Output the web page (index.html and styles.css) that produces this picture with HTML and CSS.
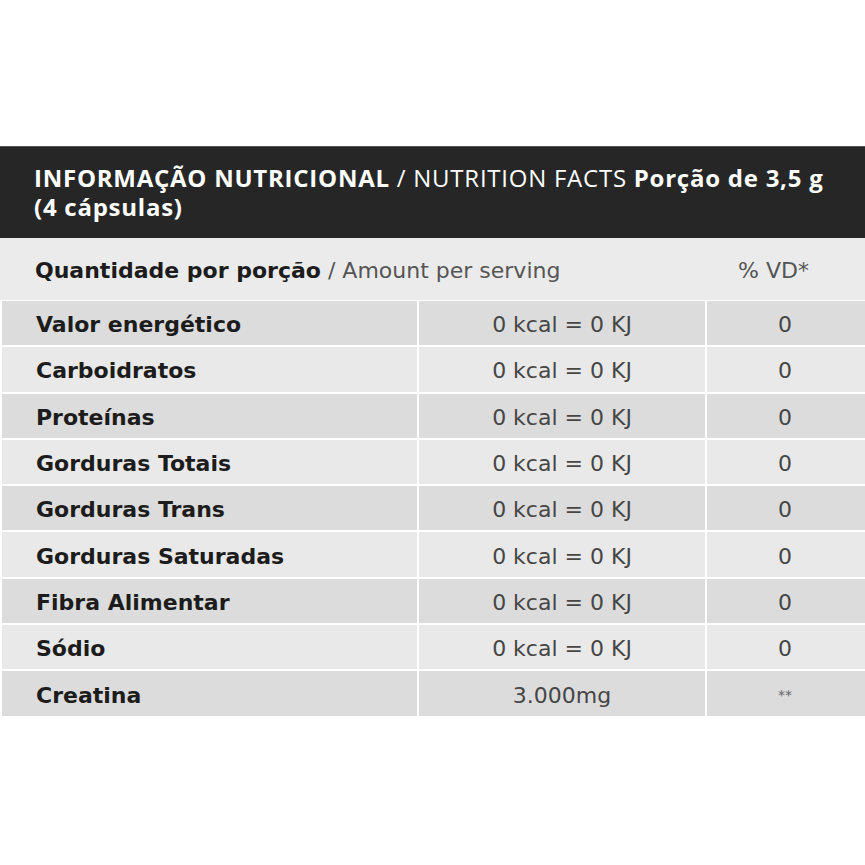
FILE: index.html
```html
<!DOCTYPE html>
<html lang="pt">
<head>
<meta charset="utf-8">
<title>Informação Nutricional</title>
<link rel="stylesheet" href="styles.css">
</head>
<body>
<div class="page">
  <div class="top-space"></div>
  <section class="facts">
    <header class="facts-head">
      <strong>INFORMAÇÃO NUTRICIONAL</strong> / NUTRITION FACTS <strong>Porção de 3,5 g (4 cápsulas)</strong>
    </header>
    <div class="facts-sub">
      <div class="sub-label"><strong>Quantidade por porção</strong> / Amount per serving</div>
      <div class="sub-vd">% VD*</div>
    </div>
    <div class="rows">
      <div class="row dark"><div class="c name">Valor energético</div><div class="c val">0 kcal = 0 KJ</div><div class="c vd">0</div></div>
      <div class="row light"><div class="c name">Carboidratos</div><div class="c val">0 kcal = 0 KJ</div><div class="c vd">0</div></div>
      <div class="row dark"><div class="c name">Proteínas</div><div class="c val">0 kcal = 0 KJ</div><div class="c vd">0</div></div>
      <div class="row light"><div class="c name">Gorduras Totais</div><div class="c val">0 kcal = 0 KJ</div><div class="c vd">0</div></div>
      <div class="row dark"><div class="c name">Gorduras Trans</div><div class="c val">0 kcal = 0 KJ</div><div class="c vd">0</div></div>
      <div class="row light"><div class="c name">Gorduras Saturadas</div><div class="c val">0 kcal = 0 KJ</div><div class="c vd">0</div></div>
      <div class="row dark"><div class="c name">Fibra Alimentar</div><div class="c val">0 kcal = 0 KJ</div><div class="c vd">0</div></div>
      <div class="row light"><div class="c name">Sódio</div><div class="c val">0 kcal = 0 KJ</div><div class="c vd">0</div></div>
      <div class="row dark"><div class="c name">Creatina</div><div class="c val">3.000mg</div><div class="c vd stars">**</div></div>
    </div>
  </section>
</div>
</body>
</html>
```

FILE: styles.css
```css
html, body {
  margin: 0;
  padding: 0;
  background: #ffffff;
}
body {
  font-family: "DejaVu Sans", "Open Sans", sans-serif;
  color: #1c1c1c;
}
.page {
  width: 865px;
}
.top-space {
  height: 146px;
}
.facts-head {
  background: #262626;
  color: #ffffff;
  font-family: "Open Sans", "Liberation Sans", sans-serif;
  font-size: 24px;
  letter-spacing: 0.75px;
  line-height: 29px;
  padding: 16px 30px 17px 34px;
  height: 58px;
  border-top: 1px solid #555;
}
.facts-head strong {
  font-weight: 700;
}
.facts-sub {
  background: #ebebeb;
  height: 62px;
  display: grid;
  grid-template-columns: 706px 1fr;
  align-items: center;
  font-size: 22px;
  color: #555;
  padding-top: 3px;
  box-sizing: border-box;
}
.sub-label {
  padding-left: 35px;
}
.sub-label strong {
  color: #1c1c1c;
  font-weight: 700;
}
.sub-vd {
  text-align: center;
  padding-right: 24px;
}
.rows {
  display: flex;
  flex-direction: column;
  gap: 2px;
  padding-top: 1px;
  border-left: 2px solid #fff;
}
.row {
  display: grid;
  grid-template-columns: 415px 286px 1fr;
  column-gap: 2px;
  height: 44.3px;
}
.c {
  display: flex;
  align-items: center;
  font-size: 22px;
  padding-top: 3px;
}
.dark .c { background: #dcdcdc; }
.light .c { background: #e9e9e9; }
.name {
  padding-left: 34px;
  font-weight: 700;
  color: #1c1c1c;
}
.val, .vd {
  justify-content: center;
  color: #464646;
}
.vd {
  padding-right: 2px;
}
.stars {
  font-size: 14px;
  color: #666;
}
```
